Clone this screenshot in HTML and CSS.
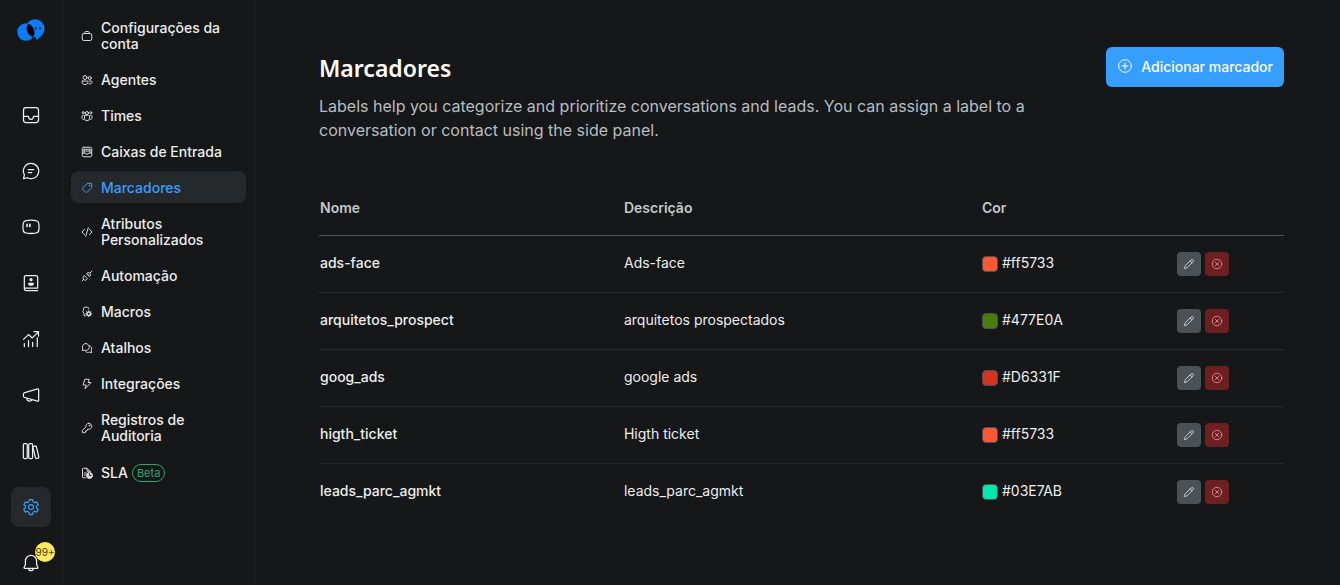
FILE: index.html
```html
<!DOCTYPE html>
<html lang="pt-BR">
<head>
  <title>Marcadores</title>
  <meta charset="utf-8" />
  <meta name="viewport" content="width=device-width, initial-scale=1.0" />
  <link rel="stylesheet" href="styles.css">
</head>
<body>
<svg class="sprite" aria-hidden="true">
  <symbol id="inbox" viewBox="0 0 24 24"><rect x="3" y="3" width="18" height="18" rx="3"/><path d="M3 13.7h5.5c.4 0 .7.3.7.8 0 1.5 1.2 2.7 2.8 2.7s2.800-1.200 2.800-2.700c0-.5.3-.8.7-.8H21"/></symbol>
  <symbol id="chat" viewBox="0 0 24 24"><path d="M12 2.800a9.200 9.200 0 1 1-4.300 17.300L3 21.200l1.100-4.600A9.200 9.200 0 0 1 12 2.800zM8.700 10.300h6.600M8.700 13.800h4.100"/></symbol>
  <symbol id="captain" viewBox="0 0 24 24"><path d="M6 4.400C9 3.800 15 3.800 18 4.400c2.200.5 3.200 1.600 3.400 3.400.3 2.500.3 5.500 0 8-.2 1.900-1.300 3-3.400 3.400-3 .6-9 .6-12 0-2.100-.4-3.200-1.500-3.400-3.400-.3-2.500-.3-5.500 0-8C2.800 6 3.800 4.900 6 4.400z"/><path d="M7.300 8.800v2.500M10.700 8.800v2.500" stroke-width="2"/></symbol>
  <symbol id="contacts" viewBox="0 0 24 24"><path d="M20 18.200H4M20 21H6a2 2 0 0 1-2-2V5.200C4 3.700 4.700 3 6.200 3h11.600c1.500 0 2.200.7 2.200 2.200v13"/><circle cx="12" cy="8" r="1.200" class="solid"/><path d="M9.300 12.500h5.400c0 1.500-1 2-2.700 2s-2.700-.5-2.700-2z" class="solid"/></symbol>
  <symbol id="reports" viewBox="0 0 24 24"><path d="M4 21v-3.500M9 21v-7M14 21v-5M19.500 21V10.500M3 12.500l6-5.800 4.500 4L21 3.500M15.500 3H21v5.500"/></symbol>
  <symbol id="campaign" viewBox="0 0 24 24"><path d="M3.600 9.500 19.800 4.700c.8-.2 1.400.3 1.400 1.100v12.500c0 .8-.6 1.300-1.400 1L3.600 14.700c-1-.6-1-4.600 0-5.200zM7 16.200c.3 2.200 1.400 3.200 3.300 3.200 1.500 0 2.400-.6 2.800-1.700"/></symbol>
  <symbol id="library" viewBox="0 0 24 24"><rect x="2.800" y="3" width="4.700" height="18" rx="1.500"/><rect x="9.200" y="3" width="4.700" height="18" rx="1.500"/><rect x="15.800" y="6" width="4.200" height="15" rx="1.400" transform="rotate(-14 18 13.500)"/></symbol>
  <symbol id="gear" viewBox="0 0 24 24"><path class="fill" d="M12.012 2.250c.734.008 1.465.093 2.182.253a.75.75 0 0 1 .582.649l.17 1.527a1.384 1.384 0 0 0 1.927 1.116l1.401-.615a.75.75 0 0 1 .85.174 9.792 9.792 0 0 1 2.204 3.792.75.75 0 0 1-.271.825l-1.242.916a1.381 1.381 0 0 0 0 2.226l1.243.915a.75.75 0 0 1 .272.826 9.797 9.797 0 0 1-2.204 3.792.75.75 0 0 1-.848.175l-1.407-.617a1.38 1.38 0 0 0-1.926 1.114l-.169 1.526a.75.75 0 0 1-.572.647 9.518 9.518 0 0 1-4.406 0 .75.75 0 0 1-.572-.647l-.168-1.524a1.382 1.382 0 0 0-1.926-1.110l-1.406.616a.75.75 0 0 1-.849-.175 9.798 9.798 0 0 1-2.204-3.796.75.75 0 0 1 .272-.826l1.243-.916a1.380 1.380 0 0 0 0-2.226l-1.243-.914a.75.75 0 0 1-.271-.826 9.793 9.793 0 0 1 2.204-3.792.75.75 0 0 1 .85-.174l1.400.615a1.387 1.387 0 0 0 1.930-1.118l.17-1.526a.75.75 0 0 1 .583-.65c.717-.159 1.450-.243 2.201-.252Zm0 1.500a9.135 9.135 0 0 0-1.354.117l-.109.977A2.886 2.886 0 0 1 6.525 7.170l-.898-.394a8.293 8.293 0 0 0-1.348 2.317l.798.587a2.881 2.881 0 0 1 0 4.643l-.799.588c.32.842.776 1.626 1.348 2.322l.905-.397a2.882 2.882 0 0 1 4.017 2.318l.11.984c.889.15 1.798.15 2.687 0l.11-.984a2.881 2.881 0 0 1 4.018-2.322l.905.396a8.296 8.296 0 0 0 1.347-2.318l-.798-.588a2.881 2.881 0 0 1 0-4.643l.796-.587a8.293 8.293 0 0 0-1.348-2.317l-.896.392a2.884 2.884 0 0 1-4.023-2.324l-.11-.976a8.988 8.988 0 0 0-1.333-.117ZM12 8.250a3.750 3.750 0 1 1 0 7.500 3.750 3.750 0 0 1 0-7.500Zm0 1.500a2.250 2.250 0 1 0 0 4.500 2.250 2.250 0 0 0 0-4.500Z"/></symbol>
  <symbol id="bell" viewBox="0 0 24 24"><path d="M12 2.800a6.700 6.700 0 0 1 6.700 6.700v4.300l1.600 3.600c.2.500 0 .9-.6.900H4.300c-.6 0-.8-.4-.6-.9l1.600-3.600V9.500A6.700 6.700 0 0 1 12 2.800zM9.300 18.500a2.700 2.700 0 0 0 5.400 0"/></symbol>
  <symbol id="briefcase" viewBox="0 0 24 24"><rect x="2.500" y="7" width="19" height="14" rx="3"/><path d="M8 7V4.500C8 3.500 8.500 3 9.500 3h5c1 0 1.500.5 1.500 1.500V7"/></symbol>
  <symbol id="people" viewBox="0 0 24 24"><circle cx="8" cy="7" r="4"/><circle cx="17.500" cy="8" r="3"/><path d="M3.500 14h9c1 0 1.500.6 1.500 1.500 0 3.500-2 5.500-6 5.500s-6-2-6-5.500c0-.9.500-1.500 1.500-1.500zM16.500 14h4c1 0 1.500.6 1.500 1.500 0 3.300-2.300 5-6 4.300"/></symbol>
  <symbol id="team" viewBox="0 0 24 24"><circle cx="12" cy="6" r="3"/><circle cx="4.500" cy="5.500" r="2.200"/><circle cx="19.500" cy="5.500" r="2.200"/><path d="M8.500 10.500h7c1 0 1.500.5 1.500 1.500v4.500a5 5 0 0 1-10 0V12c0-1 .5-1.500 1.500-1.500zM4.500 10.500c-1.500 0-2.500.3-2.500 1.500v3.500c0 2 1 3.200 3 3.500M19.500 10.500c1.500 0 2.500.3 2.500 1.500v3.500c0 2-1 3.200-3 3.500"/></symbol>
  <symbol id="mailbox" viewBox="0 0 24 24"><rect x="2.500" y="2.500" width="19" height="19" rx="3"/><path d="M6 6.500h12M6 10h12M6 6.500V14M18 6.500V14M3 14h5.500c.5 3 6.500 3 7 0H21"/></symbol>
  <symbol id="tag" viewBox="0 0 24 24"><path d="M13.300 2.800 20 2.500c1 0 1.500.5 1.500 1.500l-.3 6.700c0 .6-.3 1-.7 1.500l-8.300 8.300c-.9.900-2 .9-2.900 0l-5.800-5.800c-.9-.9-.9-2 0-2.900l8.300-8.300c.400-.400.900-.7 1.500-.7z"/><circle cx="17" cy="7" r=".9"/></symbol>
  <symbol id="code" viewBox="0 0 24 24"><path d="m7 6.500-5 5.500 5 5.500M17 6.500l5 5.500-5 5.500M14.500 3.500l-5 17"/></symbol>
  <symbol id="plug" viewBox="0 0 24 24"><path d="m22 2-3.500 3.500M12.500 7.500l4 4M12 7l1.500-1.500a4.300 4.300 0 0 1 5.500 5.500L17 12.500zM2 22l3.500-3.500M7 11.500l6 6L11.500 19A4.300 4.300 0 0 1 5 13z"/></symbol>
  <symbol id="macros" viewBox="0 0 24 24"><path d="M8.500 19.500H6V15L3.500 11 5 9V5c0-1.500.8-2.500 2.500-2.500H13c1.700 0 2.500 1 2.500 2.500v1"/><circle cx="15.500" cy="15.500" r="3.500" stroke-width="3"/><path d="M15.500 9.500v1.500M15.500 20v1.500M9.500 15.500H11M20 15.500h1.500M11.300 11.300l1 1M19.700 11.300l-1 1M11.300 19.700l1-1M19.700 19.700l-1-1" stroke-width="2"/></symbol>
  <symbol id="chats" viewBox="0 0 24 24"><path d="M9.500 3a7 7 0 1 1-3 13.300L2.500 17.500l1-4A7.100 7.100 0 0 1 9.500 3zM9.500 19.500c2 1.600 5 2 7.500.8l4.500 1.200-1.200-4.200c2.200-4 .7-8.300-3-10"/></symbol>
  <symbol id="flash" viewBox="0 0 24 24"><path d="M8.500 2.500h8L14 9h6L8 21.500 10.500 14H5z"/></symbol>
  <symbol id="key" viewBox="0 0 24 24"><path d="M15.500 2.500a6 6 0 1 1-1.500 11.800L11.500 16v2H9v2.500c0 .6-.4 1-1 1H3.500c-.6 0-1-.4-1-1V17l7.300-7.300A6 6 0 0 1 15.500 2.500z"/><circle cx="17" cy="7" r=".9"/></symbol>
  <symbol id="sla" viewBox="0 0 24 24"><path d="M9 21.500H4.500c-1 0-1.500-.5-1.500-1.500V4c0-1 .5-1.500 1.500-1.500H12l6 6V10M12 2.500v6h6M6.500 12h4M6.500 16h2.500"/><circle cx="17" cy="17" r="6" class="solid"/><path d="M17 13.500V17h3" class="hand"/></symbol>
  <symbol id="add" viewBox="0 0 24 24"><circle cx="12" cy="12" r="9.500"/><path d="M12 7.500v9M7.500 12h9"/></symbol>
  <symbol id="pencil" viewBox="0 0 24 24"><path d="M16.500 3.800a2.600 2.600 0 0 1 3.700 3.700L8 19.700l-5.200 1.500L4.300 16zM14.300 6l3.700 3.700"/></symbol>
  <symbol id="dismiss" viewBox="0 0 24 24"><circle cx="12" cy="12" r="9.500"/><path d="m8.800 8.800 6.400 6.400M15.200 8.800l-6.400 6.400"/></symbol>
</svg>

<div class="app">
  <nav class="rail" aria-label="Principal">
    <a class="logo" href="#" aria-label="Início">
      <svg viewBox="0 0 28 22"><circle cx="9" cy="13" r="8.700" fill="#0a7dff"/><path d="M18.500.3a9 9 0 0 1 9 9c0 5.500-3.600 8.800-8.300 11.900v-3A9 9 0 1 1 18.500.3z" fill="#0a7dff"/><path d="M11.500 4.700c2.700.8 5.800 4.200 6 8.300 0 2-.4 3.600-1.300 5-3.700-1-6.600-4.300-6.600-8.700 0-1.700.6-3.300 1.900-4.600z" fill="#000"/><circle cx="15" cy="9.200" r="1" fill="#000"/><circle cx="19" cy="9.200" r="1" fill="#000"/><circle cx="23.200" cy="9.200" r="1" fill="#000"/></svg>
    </a>
    <a class="rail-item" href="#" aria-label="Caixa"><svg class="icon"><use href="#inbox"/></svg></a>
    <a class="rail-item" href="#" aria-label="Conversas"><svg class="icon"><use href="#chat"/></svg></a>
    <a class="rail-item" href="#" aria-label="Capitão"><svg class="icon"><use href="#captain"/></svg></a>
    <a class="rail-item" href="#" aria-label="Contatos"><svg class="icon"><use href="#contacts"/></svg></a>
    <a class="rail-item" href="#" aria-label="Relatórios"><svg class="icon"><use href="#reports"/></svg></a>
    <a class="rail-item" href="#" aria-label="Campanhas"><svg class="icon"><use href="#campaign"/></svg></a>
    <a class="rail-item" href="#" aria-label="Central de ajuda"><svg class="icon"><use href="#library"/></svg></a>
    <a class="rail-item active" href="#" aria-label="Configurações"><svg class="icon"><use href="#gear"/></svg></a>
    <a class="rail-item" href="#" aria-label="Notificações"><svg class="icon"><use href="#bell"/></svg><span class="count">99+</span></a>
  </nav>

  <nav class="menu" aria-label="Configurações">
    <a class="menu-item" href="#"><svg class="icon small"><use href="#briefcase"/></svg><span>Configurações da conta</span></a>
    <a class="menu-item" href="#"><svg class="icon small"><use href="#people"/></svg><span>Agentes</span></a>
    <a class="menu-item" href="#"><svg class="icon small"><use href="#team"/></svg><span>Times</span></a>
    <a class="menu-item" href="#"><svg class="icon small"><use href="#mailbox"/></svg><span>Caixas de Entrada</span></a>
    <a class="menu-item active" href="#"><svg class="icon small"><use href="#tag"/></svg><span>Marcadores</span></a>
    <a class="menu-item" href="#"><svg class="icon small"><use href="#code"/></svg><span>Atributos Personalizados</span></a>
    <a class="menu-item" href="#"><svg class="icon small"><use href="#plug"/></svg><span>Automação</span></a>
    <a class="menu-item" href="#"><svg class="icon small"><use href="#macros"/></svg><span>Macros</span></a>
    <a class="menu-item" href="#"><svg class="icon small"><use href="#chats"/></svg><span>Atalhos</span></a>
    <a class="menu-item" href="#"><svg class="icon small"><use href="#flash"/></svg><span>Integrações</span></a>
    <a class="menu-item" href="#"><svg class="icon small"><use href="#key"/></svg><span>Registros de Auditoria</span></a>
    <a class="menu-item" href="#"><svg class="icon small"><use href="#sla"/></svg><span>SLA</span><span class="beta">Beta</span></a>
  </nav>

  <main class="content">
    <header class="page-header">
      <div class="intro">
        <h1>Marcadores</h1>
        <p>Labels help you categorize and prioritize conversations and leads. You can assign a label to a conversation or contact using the side panel.</p>
      </div>
      <button class="add" type="button"><svg class="icon"><use href="#add"/></svg>Adicionar marcador</button>
    </header>

    <table class="labels">
      <colgroup><col class="col-name"><col class="col-desc"><col class="col-color"><col></colgroup>
      <thead>
        <tr><th>Nome</th><th>Descrição</th><th>Cor</th><th></th></tr>
      </thead>
      <tbody>
        <tr>
          <td class="name">ads-face</td><td class="desc">Ads-face</td>
          <td><div class="color"><span class="swatch" style="background: #ff5733"></span><span class="hex">#ff5733</span></div></td>
          <td><div class="actions"><button class="edit" type="button" aria-label="Editar"><svg class="icon small"><use href="#pencil"/></svg></button><button class="delete" type="button" aria-label="Excluir"><svg class="icon small"><use href="#dismiss"/></svg></button></div></td>
        </tr>
        <tr>
          <td class="name">arquitetos_prospect</td><td class="desc">arquitetos prospectados</td>
          <td><div class="color"><span class="swatch" style="background: #477E0A"></span><span class="hex">#477E0A</span></div></td>
          <td><div class="actions"><button class="edit" type="button" aria-label="Editar"><svg class="icon small"><use href="#pencil"/></svg></button><button class="delete" type="button" aria-label="Excluir"><svg class="icon small"><use href="#dismiss"/></svg></button></div></td>
        </tr>
        <tr>
          <td class="name">goog_ads</td><td class="desc">google ads</td>
          <td><div class="color"><span class="swatch" style="background: #D6331F"></span><span class="hex">#D6331F</span></div></td>
          <td><div class="actions"><button class="edit" type="button" aria-label="Editar"><svg class="icon small"><use href="#pencil"/></svg></button><button class="delete" type="button" aria-label="Excluir"><svg class="icon small"><use href="#dismiss"/></svg></button></div></td>
        </tr>
        <tr>
          <td class="name">higth_ticket</td><td class="desc">Higth ticket</td>
          <td><div class="color"><span class="swatch" style="background: #ff5733"></span><span class="hex">#ff5733</span></div></td>
          <td><div class="actions"><button class="edit" type="button" aria-label="Editar"><svg class="icon small"><use href="#pencil"/></svg></button><button class="delete" type="button" aria-label="Excluir"><svg class="icon small"><use href="#dismiss"/></svg></button></div></td>
        </tr>
        <tr>
          <td class="name">leads_parc_agmkt</td><td class="desc">leads_parc_agmkt</td>
          <td><div class="color"><span class="swatch" style="background: #03E7AB"></span><span class="hex">#03E7AB</span></div></td>
          <td><div class="actions"><button class="edit" type="button" aria-label="Editar"><svg class="icon small"><use href="#pencil"/></svg></button><button class="delete" type="button" aria-label="Excluir"><svg class="icon small"><use href="#dismiss"/></svg></button></div></td>
        </tr>
      </tbody>
    </table>
  </main>
</div>
</body>
</html>
```

FILE: styles.css
```css
* {
  box-sizing: border-box;
}

body {
  margin: 0;
  background: #151718;
  color: #ecedee;
  font-family: Inter, "Liberation Sans", sans-serif;
  font-size: 14px;
}

a {
  color: inherit;
  text-decoration: none;
}

button {
  border: 0;
  padding: 0;
  font: inherit;
  cursor: pointer;
}

.sprite {
  display: none;
}

.icon {
  width: 20px;
  height: 20px;
  flex: none;
  fill: none;
  stroke: currentColor;
  stroke-width: 1.5;
  stroke-linecap: round;
  stroke-linejoin: round;
}

.icon.small {
  width: 12px;
  height: 12px;
}

.solid {
  fill: currentColor;
}

.fill {
  fill: currentColor;
  stroke: none;
}

.hand {
  stroke: #151718;
}

.app {
  display: flex;
  height: 100vh;
  overflow: hidden;
}

/* icon rail */
.rail {
  flex: none;
  width: 63px;
  display: flex;
  flex-direction: column;
  align-items: center;
  gap: 16px;
  border-right: 1px solid #1f2223;
}

.logo {
  height: 79px;
  padding-top: 19px;
}

.logo svg {
  display: block;
  width: 28px;
  height: 22px;
}

.rail-item {
  position: relative;
  flex: none;
  display: flex;
  align-items: center;
  justify-content: center;
  width: 40px;
  height: 40px;
  border-radius: 8px;
}

.rail-item.active,
.menu-item.active {
  background: #26292b;
  color: #369eff;
}

.count {
  position: absolute;
  top: -1px;
  right: -4px;
  width: 20px;
  height: 20px;
  border-radius: 10px;
  background: #ffec5c;
  color: #3f3a14;
  font-size: 10px;
  line-height: 20px;
  text-align: center;
}

/* settings menu */
.menu {
  flex: none;
  width: 192px;
  padding: 11px 8px;
  display: flex;
  flex-direction: column;
  gap: 4px;
  border-right: 1px solid #1f2223;
}

.menu-item {
  display: flex;
  align-items: center;
  gap: 8px;
  padding: 9px 10px 7px;
  border-radius: 8px;
  font-size: 14px;
  font-weight: 500;
  line-height: 16px;
}

.menu-item .icon {
  color: #d5d8da;
  stroke-width: 2;
}

.menu-item.active .icon {
  color: #369eff;
}

.beta {
  margin-left: -4px;
  padding: 0 4px;
  border: 1px solid #30a46c;
  border-radius: 9px;
  color: #30a46c;
  font-size: 11px;
  font-weight: 400;
}

/* page */
.content {
  flex: 1;
  min-width: 0;
  padding: 47px 56px 0 64px;
}

.page-header {
  display: flex;
  align-items: flex-start;
  justify-content: space-between;
  gap: 32px;
}

.intro {
  max-width: 720px;
}

h1 {
  margin: 5px 0 10px;
  color: #fff;
  font-family: "Noto Sans", sans-serif;
  font-size: 23px;
  font-weight: 600;
  line-height: 32px;
}

p {
  margin: 0;
  color: #b9bdc0;
  font-size: 16px;
  line-height: 24px;
}

.add {
  flex: none;
  display: flex;
  align-items: center;
  gap: 8px;
  height: 40px;
  padding: 0 11px 2px;
  border-radius: 6px;
  background: #369eff;
  color: #fff;
  font-weight: 500;
}

.add .icon {
  width: 16px;
  height: 16px;
}

.labels {
  width: 100%;
  margin-top: 39px;
  border-collapse: collapse;
  table-layout: fixed;
}

.col-name {
  width: 31.5%;
}

.col-desc {
  width: 37.1%;
}

.col-color {
  width: 20.2%;
}

th,
td {
  height: 57px;
  padding: 0 1px;
  border-bottom: 1px solid #26292b;
  text-align: left;
}

th {
  height: 54px;
  border-color: #4c5155;
  color: #c4c8ca;
  font-weight: 600;
}

tbody tr:last-child td {
  border-bottom: 0;
}

.name {
  font-weight: 500;
}

.name,
.desc,
.hex {
  padding-bottom: 2px;
}

.color,
.actions {
  display: flex;
  align-items: center;
  gap: 4px;
}

.swatch {
  width: 16px;
  height: 16px;
  border: 1px solid #4c5155;
  border-radius: 4px;
}

.actions button {
  display: flex;
  align-items: center;
  justify-content: center;
  width: 24px;
  height: 24px;
  border-radius: 4px;
  color: #ecedee;
}

.actions .edit {
  background: #4c5155;
}

.actions .delete {
  background: #6e1f22;
  color: #f2a3a0;
}
```
